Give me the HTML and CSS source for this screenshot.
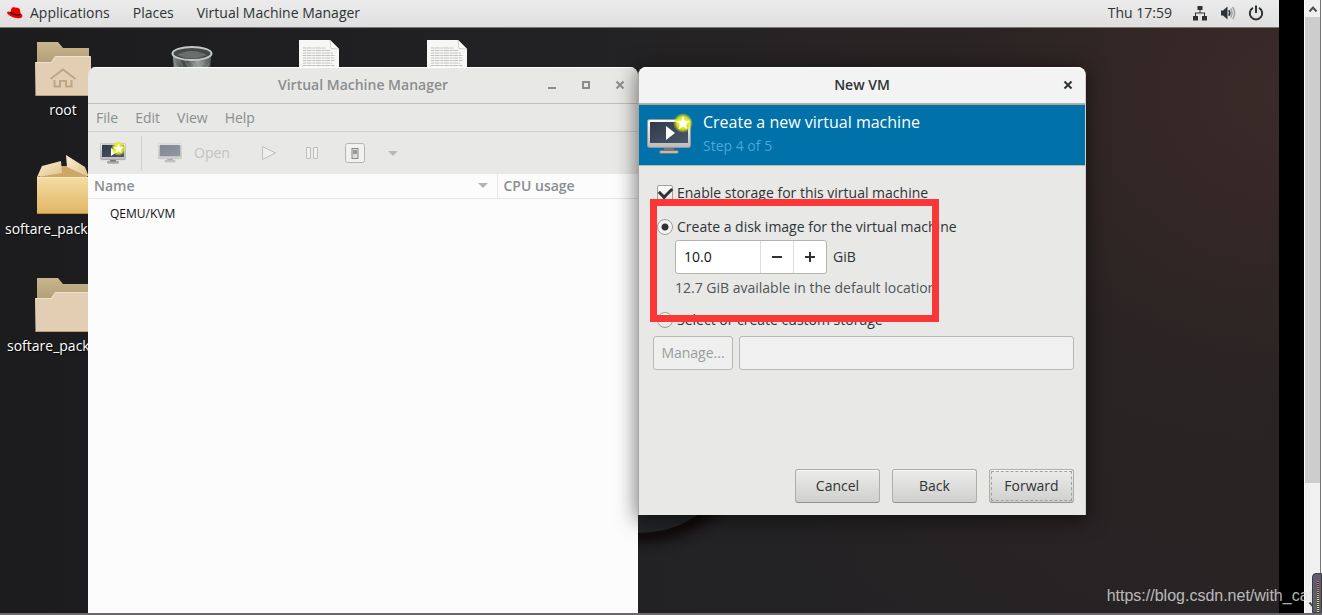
FILE: index.html
```html
<!DOCTYPE html>
<html lang="en">
<head>
<meta charset="utf-8">
<title>Virtual Machine Manager</title>
<link rel="stylesheet" href="styles.css">
</head>
<body>
<svg class="defs" aria-hidden="true">
  <defs>
    <linearGradient id="frame" x1="0" y1="0" x2="0" y2="1"><stop offset="0" stop-color="#fff"/><stop offset="1" stop-color="#b9b9b9"/></linearGradient>
    <linearGradient id="glass" x1="0" y1="0" x2="1" y2="1"><stop offset="0" stop-color="#2f3a4c"/><stop offset="1" stop-color="#4b586b"/></linearGradient>
    <linearGradient id="back" x1="0" y1="0" x2="0" y2="1"><stop offset="0" stop-color="#c8b58e"/><stop offset="1" stop-color="#a8966f"/></linearGradient>
    <linearGradient id="box" x1="0" y1="0" x2="0" y2="1"><stop offset="0" stop-color="#f5dca4"/><stop offset="1" stop-color="#e0b664"/></linearGradient>
    <linearGradient id="flap" x1="0" y1="0" x2="1" y2="1"><stop offset="0" stop-color="#fbeed2"/><stop offset="1" stop-color="#dfc08a"/></linearGradient>
    <linearGradient id="can" x1="0" y1="0" x2="1" y2="0"><stop offset="0" stop-color="#8d9492"/><stop offset=".3" stop-color="#3f4644"/><stop offset=".65" stop-color="#9aa19f"/><stop offset="1" stop-color="#4d5452"/></linearGradient>
    <radialGradient id="glow"><stop offset="0" stop-color="#f2f650"/><stop offset=".65" stop-color="#e4ec10" stop-opacity=".9"/><stop offset="1" stop-color="#dfe800" stop-opacity="0"/></radialGradient>
    <symbol id="folder" viewBox="0 0 56 54">
      <path d="M2 0H23L28 6H54V30H2Z" fill="url(#back)"/>
      <path d="M0 21Q0 20 1 20H16L20 14H54Q56 14 56 15V53Q56 54 55 54H1.500Q.5 54 .5 53Z" fill="#e2cfb3"/>
      <path d="M.5 20.500H16.500L20.500 14.500H55.500" fill="none" stroke="#efe1cb"/>
      <path d="M.5 53.500H55.500" stroke="#b69f77"/>
    </symbol>
    <symbol id="sheet" viewBox="0 0 40 56">
      <path d="M0 0H31L40 9V56H0Z" fill="#f7f7f5"/>
      <path d="M31 0L32 8.500L40 9Z" fill="#fff" stroke="#bdbdbb" stroke-width=".7"/>
      <path d="M4 8H27M4 10.500H32M4 13H34M4 15.500H36M4 18H35M4 20.500H36M4 23H33M4 25.500H36" stroke="#c0c0be" stroke-dasharray="3 .6 5 .7"/>
    </symbol>
    <symbol id="monitor" viewBox="0 0 44 36">
      <path d="M17 28H27V32H17Z" fill="#777"/>
      <rect x="12.500" y="31.500" width="19" height="3" rx="1.500" fill="#bbb" stroke="#777"/>
      <rect x=".5" y=".5" width="43" height="28" rx="2" fill="url(#frame)" stroke="#999"/>
      <rect x="3" y="3" width="38" height="21" fill="url(#glass)"/>
    </symbol>
    <symbol id="star" viewBox="0 0 20 20">
      <circle cx="10" cy="10" r="10" fill="url(#glow)"/>
      <path d="M10 3L12 7.700L17 8.100L13.200 11.500L14.400 16.300L10 13.800L5.600 16.300L6.800 11.500L3 8.100L8 7.700Z" fill="#fffef0"/>
    </symbol>
  </defs>
</svg>

<main class="desktop">
  <header class="topbar">
    <nav class="topbar-menu">
      <button class="top-item apps">
        <svg width="16" height="12" viewBox="0 0 16 12"><path d="M3.500 5L4.500 1.500Q5 0 7 .2L11 1Q12.600 1.200 13 3L13.500 6.200Q15.600 7.500 15.400 9.200Q15 11.200 11 11.200Q6 11 2.500 8.500Q-.2 6.800 .1 5.200Q.6 4 3.500 5Z" fill="#e00"/><path d="M3.500 5Q4.200 7 8 7.700Q12 8.500 13.400 7" fill="none" stroke="#240606" stroke-width="1.200"/></svg>
        Applications</button>
      <button class="top-item">Places</button>
      <button class="top-item">Virtual Machine Manager</button>
    </nav>
    <div class="status">
      <button class="top-item">Thu 17:59</button>
      <button class="top-item status-icons" aria-label="System menu">
        <svg width="16" height="16" viewBox="0 0 16 16" fill="#2e3436"><path d="M5.500 1H10.500V5H5.500ZM1 11H6V15.500H1ZM10 11H15V15.500H10ZM7.500 5H8.500V7.500H13V11H12V8.500H4V11H3V7.500H7.500Z"/></svg>
        <svg width="16" height="16" viewBox="0 0 16 16"><path d="M1 5.500H3L7.500 1.500V14.500L3 10.500H1Z" fill="#2e3436"/><path d="M8.800 5.200Q10.800 8 8.800 10.800" fill="none" stroke="#2e3436" stroke-width="1.600"/><path d="M10.600 3.500Q13.600 8 10.600 12.500M12.700 2Q16.600 8 12.700 14" fill="none" stroke="#a2a4a4" stroke-width="1.500"/></svg>
        <svg width="16" height="16" viewBox="0 0 16 16" fill="none" stroke="#2e3436" stroke-width="2"><path d="M5 2.800A6.200 6.200 0 1 0 11 2.800M8 .5V8"/></svg>
      </button>
    </div>
  </header>

  <div class="canvas">
    <div class="shade"></div>
    <figure class="launcher root">
      <svg width="56" height="54"><use href="#folder"/><path d="M15.500 37L28 27.500L40.500 37M19.500 38V44.500H25V39H31V44.500H36.500V38" fill="none" stroke="#bfa580" stroke-width="2"/></svg>
      <figcaption>root</figcaption>
    </figure>
    <svg class="trash" width="42" height="30" viewBox="0 0 42 30"><path d="M1.500 7L3.500 30H38.500L40.500 7Z" fill="url(#can)"/><path d="M4 17L9 28M8 14L16 28M14 15L22 28M20 15L28 28M38 17L33 28M33 15L25 28M26 15L18 28" stroke="#b8bfbd" stroke-width=".6" opacity=".5"/><ellipse cx="21" cy="7.500" rx="19.500" ry="6.500" fill="#444a49" stroke="#c3c8c6" stroke-width="2"/><path d="M6 9Q20 1 36 9Q21 16 6 9" fill="#696e6d"/></svg>
    <svg class="sheet sheet-a" width="40" height="56"><use href="#sheet"/></svg>
    <svg class="sheet sheet-b" width="40" height="56"><use href="#sheet"/></svg>
    <figure class="launcher package">
      <svg width="52" height="60" viewBox="0 0 52 60"><path d="M3 20L24 11H32L50 20V26H3Z" fill="#cba867"/><path d="M0 22H52V59H0Z" fill="url(#box)"/><path d="M0 22.500H52" stroke="#f9e7bd"/><path d="M0 58.500H52" stroke="#b78d3e"/><path d="M5 11L24 6L25 18L0 22Z" fill="url(#flap)"/><path d="M29 0L48 12L52 22L30 12Z" fill="url(#flap)"/></svg>
      <figcaption>softare_package</figcaption>
    </figure>
    <figure class="launcher packages">
      <svg width="56" height="54"><use href="#folder"/></svg>
      <figcaption>softare_packag</figcaption>
    </figure>

    <section class="window manager">
      <div class="titlebar">
        <h1>Virtual Machine Manager</h1>
        <div class="controls">
          <button aria-label="Minimize"><svg width="10" height="10"><path d="M1 8H9" stroke="#8b8e8f" stroke-width="2"/></svg></button>
          <button aria-label="Maximize"><svg width="10" height="10"><path d="M2 2H8V8H2Z" fill="none" stroke="#8b8e8f" stroke-width="2"/></svg></button>
          <button aria-label="Close"><svg width="10" height="10"><path d="M1.500 1.500L8.500 8.500M8.500 1.500L1.500 8.500" stroke="#8b8e8f" stroke-width="2"/></svg></button>
        </div>
      </div>
      <nav class="menubar"><button>File</button><button>Edit</button><button>View</button><button>Help</button></nav>
      <div class="toolbar">
        <button class="new-vm" aria-label="New virtual machine"><svg width="26" height="24" viewBox="0 0 26 24"><svg y="2" width="26" height="21" viewBox="0 0 44 36"><use href="#monitor" width="44" height="36"/></svg><path d="M11 7V15L17 11Z" fill="#fff"/><svg x="11" y="0" width="15" height="15" viewBox="0 0 20 20"><use href="#star" width="20" height="20"/></svg></svg></button>
        <button class="open" disabled><svg class="faded" width="24" height="20" viewBox="0 0 44 36"><use href="#monitor" width="44" height="36"/></svg>Open</button>
        <button class="run" disabled aria-label="Run"><svg width="16" height="16"><path d="M1.500 1.500V14.500L14.500 8Z" fill="#efefed" stroke="#bfbfbd"/></svg></button>
        <button class="pause" disabled aria-label="Pause"><svg width="14" height="14"><path d="M1.500 1.500H5.500V12.500H1.500ZM8.500 1.500H12.500V12.500H8.500Z" fill="#efefed" stroke="#bfbfbd"/></svg></button>
        <button class="power" disabled aria-label="Shut down"><svg width="20" height="20"><rect x=".5" y=".5" width="19" height="19" rx="2" fill="#f1f1ef" stroke="#b4b4b2"/><rect x="7" y="5.500" width="6" height="10" fill="#ddd" stroke="#888"/><path d="M8 7H12V11H8Z" fill="#999"/></svg></button>
        <button class="more" disabled aria-label="Shut down options"><svg width="10" height="5"><path d="M0 0H10L5 5Z" fill="#b9b9b7"/></svg></button>
      </div>
      <table class="vms">
        <thead><tr><th><span class="sort">Name <svg width="10" height="5"><path d="M0 0H10L5 5Z" fill="#b4b4b4"/></svg></span></th><th class="cpu">CPU usage</th></tr></thead>
        <tbody><tr><td>QEMU/KVM</td><td></td></tr></tbody>
      </table>
    </section>

    <form class="window dialog">
      <div class="titlebar">
        <h2>New VM</h2>
        <div class="controls"><button type="button" aria-label="Close"><svg width="10" height="10"><path d="M1.500 1.500L8.500 8.500M8.500 1.500L1.500 8.500" stroke="#2e3436" stroke-width="2"/></svg></button></div>
      </div>
      <div class="banner">
        <svg width="46" height="42" viewBox="0 0 46 42"><svg y="6" width="44" height="36"><use href="#monitor"/></svg><path d="M19 13V27L28 20Z" fill="#fff"/><svg x="26" y="0" width="20" height="20"><use href="#star"/></svg></svg>
        <div><p class="banner-title">Create a new virtual machine</p><p class="banner-step">Step 4 of 5</p></div>
      </div>
      <div class="fields">
        <label class="choice"><input type="checkbox" checked>Enable storage for this virtual machine</label>
        <label class="choice create"><input type="radio" name="storage" checked>Create a disk image for the virtual machine</label>
        <div class="size">
          <div class="spin"><input type="text" value="10.0" id="disk-size">
            <button type="button" aria-label="Decrease"><svg width="10" height="10"><path d="M0 5H10" stroke="#2e3436" stroke-width="2"/></svg></button>
            <button type="button" aria-label="Increase"><svg width="10" height="10"><path d="M0 5H10M5 0V10" stroke="#2e3436" stroke-width="2"/></svg></button>
          </div>
          <label for="disk-size">GiB</label>
        </div>
        <p class="hint">12.7 GiB available in the default location</p>
        <label class="choice"><input type="radio" name="storage">Select or create custom storage</label>
        <div class="custom"><button class="btn" type="button" disabled>Manage...</button><input type="text" aria-label="Custom storage path" disabled></div>
      </div>
      <div class="actions">
        <button class="btn" type="button">Cancel</button>
        <button class="btn" type="button">Back</button>
        <button class="btn focused" type="button">Forward</button>
      </div>
      <div class="highlight"></div>
    </form>
  </div>
</main>
<div class="gutter"></div>
<aside class="scroll">
  <button aria-label="Scroll up"><svg width="10" height="8"><path d="M1.500 6.500L5 2.500L8.500 6.500" fill="none" stroke="#505050" stroke-width="2"/></svg></button>
  <div class="thumb"></div>
  <button class="down" aria-label="Scroll down"><svg width="10" height="8"><path d="M1.500 1.500L5 5.500L8.500 1.500" fill="none" stroke="#505050" stroke-width="2"/></svg></button>
</aside>
<p class="watermark">https://blog.csdn.net/with_cat</p>
<div class="meter"><div class="bars"></div></div>
</body>
</html>
```

FILE: styles.css
```css
* { box-sizing: border-box; }

body {
  margin: 0;
  height: 100vh;
  display: flex;
  position: relative;
  overflow: hidden;
  border-bottom: 2px solid #6b696b;
  background: #000;
  color: #2e3436;
  font: 14px/20px "Open Sans", "Noto Sans", sans-serif;
}

h1, h2, p, figure { margin: 0; }

button, input { font: inherit; color: inherit; }

button { border: 0; padding: 0; background: none; }

svg { display: block; flex: none; }

.defs { position: absolute; width: 0; height: 0; }

.desktop {
  flex: 1;
  min-width: 0;
  display: flex;
  flex-direction: column;
  background:
    radial-gradient(ellipse 700px 640px at 100% 15%, #3b2a28, rgba(44, 36, 36, .8) 45%, rgba(36, 35, 37, 0) 100%),
    linear-gradient(90deg, #1c1c1e, #222224 45%, #272324);
}

.topbar {
  height: 28px;
  display: flex;
  justify-content: space-between;
  padding: 0 15px 1px 7px;
  background: linear-gradient(#ececec, #dfdfdf);
  border-bottom: 1px solid #777;
}

.topbar-menu, .status, .top-item { display: flex; align-items: center; }
.topbar-menu { gap: 23px; }
.apps { gap: 7px; }
.status { gap: 20px; }
.status-icons { gap: 12px; }

.canvas { flex: 1; position: relative; overflow: hidden; }

.shade {
  position: absolute;
  left: 540px;
  top: 305px;
  width: 200px;
  height: 200px;
  border-radius: 50%;
  background: #222426;
  box-shadow: 4px 10px 12px #120b0b;
}

.launcher {
  position: absolute;
  display: flex;
  flex-direction: column;
  align-items: center;
  gap: 4px;
  color: #fff;
  text-shadow: 1px 1px 1px #000;
}

.root { left: 35px; top: 14px; }
.package { left: 5px; top: 127px; }
.packages { left: 7px; top: 250px; }
.package, .packages { align-items: flex-start; }
.package svg { margin-left: 32px; }
.packages svg { margin-left: 28px; }
.trash { position: absolute; left: 171px; top: 18px; }
.sheet { position: absolute; top: 12px; }
.sheet-a { left: 299px; }
.sheet-b { left: 427px; }

.window {
  position: absolute;
  display: flex;
  flex-direction: column;
  border-radius: 8px 8px 0 0;
  background: #e8e8e6;
  overflow: hidden;
}

.titlebar {
  height: 37px;
  display: grid;
  grid-template-columns: 1fr auto 1fr;
  align-items: center;
  border-bottom: 1px solid #bfbfbd;
  box-shadow: inset 0 1px #fff;
}

.titlebar h1, .titlebar h2 { grid-column: 2; font-size: 14px; line-height: 20px; font-weight: 600; }
.controls { display: flex; gap: 24px; justify-self: end; padding-right: 13px; }

.manager { left: 88px; top: 39px; bottom: 0; width: 550px; color: #8b8e8f; }

.menubar {
  height: 28px;
  display: flex;
  align-items: center;
  gap: 17px;
  padding: 0 8px;
  border-bottom: 1px solid #cfcfcd;
}

.toolbar { height: 42px; display: flex; align-items: center; padding: 0 12px; }
.toolbar button { display: flex; align-items: center; }
.new-vm { height: 34px; padding-right: 15px; border-right: 1px solid #cfcfcd; }
.open { gap: 12px; margin-left: 16px; color: #c2c3c2; }
.faded { opacity: .55; }
.run { margin-left: 31px; }
.pause { margin-left: 28px; }
.power { margin-left: 26px; }
.more { margin-left: 23px; }

.vms { border-collapse: collapse; background: #fcfcfc; width: 100%; }
.manager { background: linear-gradient(#e8e8e6 107px, #fcfcfc 107px); }
.vms th { height: 24px; padding: 0 6px; text-align: left; font-weight: 600; border-bottom: 1px solid #e6e6e6; }
.cpu { width: 141px; border-left: 1px solid #e6e6e6; }
.sort { display: flex; align-items: center; justify-content: space-between; padding-right: 3px; }
.vms td { height: 31px; padding: 0 22px; color: #111; font-size: 12px; }

.dialog {
  left: 638px;
  top: 39px;
  width: 448px;
  overflow: visible;
  border-left: 1px solid #a5a5a1;
  border-right: 1px solid #d0d0ce;
  box-shadow: 0 3px 20px 2px rgba(0, 0, 0, .5);
}

.dialog .titlebar {
  border-radius: 8px 8px 0 0;
  background: #f3f3f3;
  border-bottom-color: #b4b4aa;
}

.dialog .controls { padding-right: 12px; }

.banner {
  display: flex;
  gap: 10px;
  align-items: center;
  height: 62px;
  padding: 0 8px 3px;
  border-top: 1px solid #a9a99f;
  border-bottom: 1px solid #b9b9b0;
  background: #0071a9;
}

.banner-title { color: #fff; font-size: 16px; line-height: 24px; }
.banner-step { color: #4ba6dc; line-height: 24px; }

.fields { display: flex; flex-direction: column; padding: 17px 11px 0 14px; }

.choice { display: flex; align-items: center; gap: 4px; padding-left: 4px; }
.create { margin-top: 14px; }

.choice input {
  appearance: none;
  flex: none;
  width: 16px;
  height: 16px;
  margin: 0;
  border: 1px solid #9c9f9a;
  border-radius: 2px;
  background: linear-gradient(#fff, #e4e4e2);
}

.choice [type="radio"] { border-radius: 50%; }
.choice [type="radio"]:checked { background: radial-gradient(circle, #2e3436 3px, #f4f4f2 4px); }
.choice [type="checkbox"]:checked { display: grid; place-items: center; }

.choice [type="checkbox"]:checked::before {
  content: "";
  width: 10px;
  height: 6px;
  margin-bottom: 3px;
  border: solid #2e3436;
  border-width: 0 0 3px 3px;
  transform: rotate(-45deg);
}

.size { display: flex; align-items: center; gap: 6px; margin: 3px 0 4px 22px; }

.spin {
  display: flex;
  width: 152px;
  height: 34px;
  border: 1px solid #b2b4ae;
  border-radius: 3px;
  background: #fff;
}

.spin input { flex: 1; min-width: 0; border: 0; padding: 0 8px; background: none; color: #111; }
.spin button { width: 33px; display: grid; place-items: center; border-left: 1px solid #dcdcda; }

.hint { margin: 0 0 12px 22px; color: #50555a; }

.custom { display: flex; gap: 6px; margin-top: 6px; }
.custom .btn { width: 80px; }
.custom input { flex: 1; min-width: 0; height: 34px; border: 1px solid #b8b8b4; border-radius: 3px; background: #f0f0f0; }

.btn {
  width: 85px;
  height: 34px;
  border: 1px solid #adada9;
  border-bottom-color: #92928e;
  border-radius: 3px;
  background: linear-gradient(#ececea, #cfcfcd);
  box-shadow: inset 0 1px #f8f8f6;
}

.btn:disabled { color: #9a9d9d; background: #efefef; border-color: #b8b8b4; box-shadow: none; }
.focused { outline: 1px dashed #a2a29d; outline-offset: -3px; }

.actions { display: flex; justify-content: flex-end; gap: 12px; padding: 99px 11px 12px; }

.highlight {
  position: absolute;
  left: 11px;
  top: 132px;
  width: 289px;
  height: 123px;
  border: 7px solid #fb3637;
  pointer-events: none;
}

.gutter { width: 25px; }

.scroll {
  width: 18px;
  display: flex;
  flex-direction: column;
  border: solid #fff;
  border-width: 0 1px;
  background: #f0f0f0;
  box-shadow: inset -1px 0 #777;
}

.scroll button { height: 17px; display: grid; place-items: center; }
.thumb { flex: 0 0 76%; margin-right: 1px; background: #cdcdcd; }
.scroll .down { margin-top: auto; }

.watermark {
  position: absolute;
  right: 9px;
  bottom: 7px;
  color: rgba(225, 225, 225, .8);
  font: 16px/20px "Liberation Sans", sans-serif;
}

.meter {
  position: absolute;
  right: 0;
  bottom: 0;
  width: 10px;
  height: 40px;
  padding: 7px 2px 0 4px;
  border: 1px solid #3a3c4c;
  border-radius: 4px 0 0 0;
  background: #5c5e70;
}

.bars { height: 100%; background: repeating-linear-gradient(transparent 0 1px, #33343c 1px 2px), linear-gradient(#e8605a, #e8a850 40%, #e8f050 60%); }
```
